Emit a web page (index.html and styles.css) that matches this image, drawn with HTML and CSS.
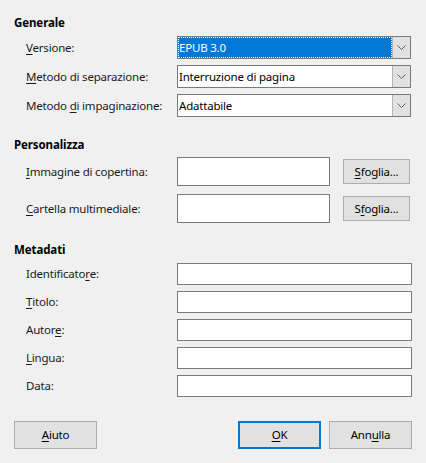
FILE: index.html
```html
<!DOCTYPE html>
<html lang="it">
<head>
<meta charset="utf-8">
<link rel="stylesheet" href="styles.css">
</head>
<body>
<div class="dialog">
  <div class="section sec-gen">
    <div class="heading">Generale</div>
    <div class="grid rows-combo">
      <label class="lbl"><u>V</u>ersione:</label>
      <div class="combo focused">
        <div class="value"><span class="focusrect">EPUB 3.0</span></div>
        <div class="drop"><svg width="9" height="5" viewBox="0 0 9 5"><path d="M0.5 0.5 L4.5 4.5 L8.5 0.5" fill="none" stroke="#606060" stroke-width="1"/></svg></div>
      </div>
      <label class="lbl"><u>M</u>etodo di separazione:</label>
      <div class="combo">
        <div class="value">Interruzione di pagina</div>
        <div class="drop"><svg width="9" height="5" viewBox="0 0 9 5"><path d="M0.5 0.5 L4.5 4.5 L8.5 0.5" fill="none" stroke="#606060" stroke-width="1"/></svg></div>
      </div>
      <label class="lbl">Metodo <u>d</u>i impaginazione:</label>
      <div class="combo">
        <div class="value">Adattabile</div>
        <div class="drop"><svg width="9" height="5" viewBox="0 0 9 5"><path d="M0.5 0.5 L4.5 4.5 L8.5 0.5" fill="none" stroke="#606060" stroke-width="1"/></svg></div>
      </div>
    </div>
  </div>

  <div class="section sec-pers">
    <div class="heading">Personalizza</div>
    <div class="grid rows-browse">
      <label class="lbl"><u>I</u>mmagine di copertina:</label>
      <div class="browse-row">
        <div class="field tall"></div>
        <button class="btn browse"><u>S</u>foglia...</button>
      </div>
      <label class="lbl"><u>C</u>artella multimediale:</label>
      <div class="browse-row">
        <div class="field tall"></div>
        <button class="btn browse">S<u>f</u>oglia...</button>
      </div>
    </div>
  </div>

  <div class="section sec-meta">
    <div class="heading">Metadati</div>
    <div class="grid rows-meta">
      <label class="lbl">Identificato<u>r</u>e:</label>
      <div class="field"></div>
      <label class="lbl"><u>T</u>itolo:</label>
      <div class="field"></div>
      <label class="lbl">Autor<u>e</u>:</label>
      <div class="field"></div>
      <label class="lbl"><u>L</u>ingua:</label>
      <div class="field"></div>
      <label class="lbl">Data:</label>
      <div class="field"></div>
    </div>
  </div>

  <div class="buttons">
    <button class="btn"><u>A</u>iuto</button>
    <div class="spacer"></div>
    <button class="btn default"><u>O</u>K</button>
    <button class="btn">Ann<u>u</u>lla</button>
  </div>
</div>
</body>
</html>
```

FILE: styles.css
```css
html, body {
  margin: 0;
  padding: 0;
  background: #f0f0f0;
}
body {
  font-family: "Noto Sans", "Open Sans", sans-serif;
  font-size: 11.5px;
  letter-spacing: -0.2px;
  color: #000;
}
.dialog {
  width: 426px;
  height: 463px;
  box-sizing: border-box;
  padding: 15px 14px 0 14px;
}
.heading {
  font-weight: bold;
  line-height: 16px;
  height: 16px;
  letter-spacing: -0.1px;
}
.grid {
  display: grid;
  grid-template-columns: 151px 1fr;
  align-items: center;
  padding-left: 12px;
}
u {
  text-decoration-thickness: 1px;
  text-underline-offset: 2px;
}
.lbl {
  line-height: 16px;
  white-space: nowrap;
  color: #1a1a1a;
}
.rows-combo {
  margin-top: 5px;
  row-gap: 6px;
  margin-right: 1px;
}
.combo {
  height: 23px;
  box-sizing: border-box;
  border: 1px solid #7a7a7a;
  background: #fff;
  display: flex;
}
.combo .value {
  flex: 1;
  display: flex;
  align-items: center;
  padding-left: 1px;
  line-height: 16px;
}
.combo.focused .value {
  background: #0078d7;
  color: #fff;
  padding: 0;
}
.focusrect {
  display: flex;
  align-items: center;
  height: 100%;
  width: 100%;
  box-sizing: border-box;
  border: 1px dotted #000;
  outline: 1px dotted #fff;
  outline-offset: -1px;
  padding-left: 0;
}
.combo .drop {
  width: 17px;
  border-left: 1px solid #b4b4b4;
  background: #e1e1e1;
  display: flex;
  align-items: center;
  justify-content: center;
}
.sec-pers {
  margin-top: 20px;
}
.rows-browse {
  margin-top: 4px;
  row-gap: 8px;
}
.browse-row {
  display: flex;
  align-items: center;
  gap: 13px;
}
.field {
  height: 22px;
  box-sizing: border-box;
  border: 1px solid #7a7a7a;
  background: #fff;
}
.field.tall {
  height: 29px;
  width: 153px;
}
.btn {
  font-family: inherit;
  font-size: 11.5px;
  letter-spacing: -0.2px;
  color: #000;
  background: #e1e1e1;
  border: 1px solid #adadad;
  height: 28px;
  width: 83px;
  padding: 0;
  margin: 0;
  box-sizing: border-box;
  line-height: 16px;
}
.btn.browse {
  width: 67px;
  height: 25px;
}
.btn.default {
  border: 2px solid #0078d7;
}
.sec-meta {
  margin-top: 19px;
}
.rows-meta {
  margin-top: 5px;
  row-gap: 6px;
}
.buttons {
  margin-top: 24px;
  display: flex;
  gap: 8px;
}
.spacer {
  flex: 1;
}
```
